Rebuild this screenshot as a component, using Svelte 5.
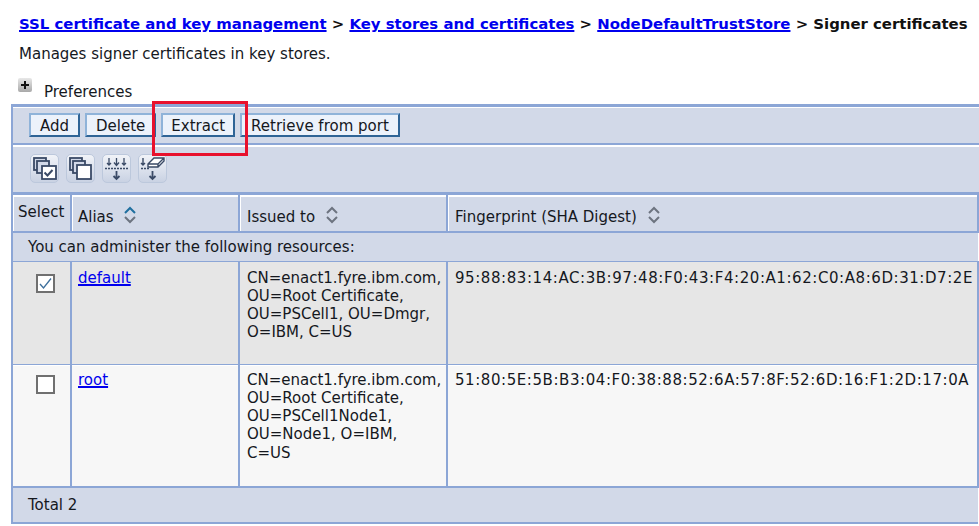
<script lang="ts">
  const crumbs = ['SSL certificate and key management', 'Key stores and certificates', 'NodeDefaultTrustStore'];
  const buttons = ['Add', 'Delete', 'Extract', 'Retrieve from port'];
  const rows = [
    {
      alias: 'default',
      checked: true,
      issued: ['CN=enact1.fyre.ibm.com,', 'OU=Root Certificate,', 'OU=PSCell1, OU=Dmgr,', 'O=IBM, C=US'],
      print: '95:88:83:14:AC:3B:97:48:F0:43:F4:20:A1:62:C0:A8:6D:31:D7:2E'
    },
    {
      alias: 'root',
      checked: false,
      issued: ['CN=enact1.fyre.ibm.com,', 'OU=Root Certificate,', 'OU=PSCell1Node1,', 'OU=Node1, O=IBM,', 'C=US'],
      print: '51:80:5E:5B:B3:04:F0:38:88:52:6A:57:8F:52:6D:16:F1:2D:17:0A'
    }
  ];
</script>

{#snippet sort(active)}
  <svg class="sort" width="14" height="20" viewBox="0 0 14 20" fill="none" stroke-width="2">
    <path d="M2 8 L7 3 L12 8" stroke={active ? '#1f6f9f' : '#6d7480'} />
    <path d="M2 12 L7 17 L12 12" stroke="#6d7480" />
  </svg>
{/snippet}

<div class="page">
  <div class="crumbs">
    {#each crumbs as c}
      <a href="#top">{c}</a><b>{' > '}</b>
    {/each}<b>Signer certificates</b>
  </div>
  <p class="desc">Manages signer certificates in key stores.</p>
  <div class="prefs">
    <span class="plus">
      <svg width="14" height="14" viewBox="0 0 14 14"><path d="M7 3v8M3 7h8" stroke="#111" stroke-width="2" /></svg>
    </span>
    <span>Preferences</span>
  </div>

  <div class="panel">
    <div class="toolbar">
      {#each buttons as b}
        <button>{b}</button>
      {/each}
    </div>
    <div class="iconbar">
      <span class="tool">
        <svg width="27" height="27" viewBox="0 0 27 27" fill="#fff" stroke="#3a4a66" stroke-width="1.800">
          <rect x="3" y="3" width="12" height="12" fill="#d2d9e8" />
          <rect x="6" y="6" width="12" height="12" fill="#d2d9e8" />
          <rect x="11" y="11" width="14" height="13" />
          <path d="M13.500 17.500l3 3 5-5.500" fill="none" stroke-width="2" />
        </svg>
      </span>
      <span class="tool">
        <svg width="27" height="27" viewBox="0 0 27 27" fill="#fff" stroke="#3a4a66" stroke-width="1.800">
          <rect x="3" y="3" width="12" height="12" fill="#d2d9e8" />
          <rect x="6" y="6" width="12" height="12" fill="#d2d9e8" />
          <rect x="10" y="10" width="14" height="14" />
        </svg>
      </span>
      <span class="tool">
        <svg width="27" height="27" viewBox="0 0 27 27" fill="none" stroke="#3a4a66" stroke-width="1.300">
          <path d="M6 3v7M4 8l2 2 2-2M13.500 3v7M11 7.500l2.500 3 2.500-3M21 3v7M19 8l2 2 2-2" />
          <path d="M2 13.500h23" stroke-dasharray="2 1" />
          <path d="M13.500 16v8M10.500 21l3 3 3-3" stroke-width="1.800" />
        </svg>
      </span>
      <span class="tool">
        <svg width="27" height="27" viewBox="0 0 27 27" fill="none" stroke="#3a4a66" stroke-width="1.400">
          <path d="M4 3v7M2 8l2 2 2-2" />
          <path d="M9 9l6-6h10v3l-6 6H9zM9 9h10v3M19 9l6-6" fill="#fff" />
          <path d="M2 13.500h8" stroke-dasharray="2 1" />
          <path d="M13.500 16v8M10.500 21l3 3 3-3" stroke-width="1.800" />
        </svg>
      </span>
    </div>

    <table>
      <colgroup>
        <col class="c1" />
        <col class="c2" />
        <col class="c3" />
        <col />
      </colgroup>
      <thead>
        <tr>
          <th class="sel">Select</th>
          <th class="alias">Alias {@render sort(true)}</th>
          <th>Issued to {@render sort(false)}</th>
          <th>Fingerprint (SHA Digest) {@render sort(false)}</th>
        </tr>
      </thead>
      <tbody>
        <tr class="note"><td colspan="4">You can administer the following resources:</td></tr>
        {#each rows as r, i}
          <tr class={i === 0 ? 'r0' : 'r1'}>
            <td class="check">
              <span class="box">
                {#if r.checked}
                  <svg width="15" height="15" viewBox="0 0 15 15" fill="none"><path d="M2 8l3.500 4 7.500-9.500" stroke="#3d6f9c" stroke-width="1.300" /></svg>
                {/if}
              </span>
            </td>
            <td class="alias"><a href="#top">{r.alias}</a></td>
            <td class="issued">
              {#each r.issued as line}
                <div>{line}</div>
              {/each}
            </td>
            <td class="print">{r.print}</td>
          </tr>
        {/each}
        <tr class="total"><td colspan="4">Total 2</td></tr>
      </tbody>
    </table>
  </div>

  <div class="mark"></div>
</div>

<style>
  :global(body) {
    margin: 0;
    background: #fff;
  }

  .page {
    position: relative;
    width: 979px;
    height: 526px;
    overflow: hidden;
    font-family: 'DejaVu Sans', Verdana, sans-serif;
    font-size: 15px;
    color: #15181e;
  }

  a {
    color: #0000ee;
    text-decoration-thickness: 2px;
  }

  .crumbs {
    padding: 14px 0 0 19px;
    height: 20px;
    line-height: 20px;
    font-size: 14.900px;
    font-weight: 700;
    white-space: pre;
    color: #111;
  }

  .desc {
    margin: 0;
    padding: 10px 0 0 19px;
    line-height: 20px;
  }

  .prefs {
    display: flex;
    align-items: flex-start;
    gap: 12px;
    height: 40px;
    padding: 14px 0 0 18px;
    line-height: 18px;
    box-sizing: border-box;
  }

  .plus {
    display: flex;
    width: 14px;
    height: 14px;
    border-radius: 2px;
    background: linear-gradient(#e8e8e8, #a9a9a9);
  }

  .prefs span:last-child {
    padding-top: 5px;
  }

  .panel {
    margin-left: 11px;
    border-left: 2px solid #8ca6d6;
    width: 968px;
    box-sizing: border-box;
    background: #fff;
  }

  .toolbar {
    display: flex;
    align-items: center;
    gap: 5px;
    height: 41px;
    box-sizing: border-box;
    padding: 0 0 0 16px;
    background: #d2d9e8;
    border-top: 3px solid #8ca6d6;
    border-bottom: 2px solid #8ca6d6;
    box-shadow: inset 0 1px 0 #fff;
  }

  button {
    height: 24px;
    padding: 1px 9px 0;
    font: inherit;
    color: inherit;
    background: #ecf2fb;
    border: 2px solid;
    border-color: #8fb3d9 #2f6496 #2f6496 #8fb3d9;
  }

  button:nth-child(3) {
    padding: 1px 8px 0;
  }

  .iconbar {
    display: flex;
    align-items: center;
    gap: 7px;
    height: 48px;
    margin-top: 2px;
    padding: 0 0 3px 17px;
    background: #d2d9e8;
    box-sizing: border-box;
    border-bottom: 3px solid #8ca6d6;
  }

  .tool {
    display: flex;
    align-items: center;
    justify-content: center;
    width: 29px;
    height: 29px;
    border-radius: 5px;
    background: linear-gradient(#f1f3f8, #c9d2e3);
    border: 1px solid #bcc8dc;
    box-sizing: border-box;
  }

  table {
    width: 100%;
    table-layout: fixed;
    border-collapse: collapse;
  }

  .c1 {
    width: 58px;
  }
  .c2 {
    width: 168px;
  }
  .c3 {
    width: 208px;
  }

  th,
  td {
    padding: 0;
    vertical-align: top;
    text-align: left;
    font-weight: 400;
  }

  th {
    height: 34px;
    padding: 0 0 2px 7px;
    vertical-align: bottom;
    line-height: 24px;
    background: #d2d9e8;
    border: 2px solid #8ca6d6;
    border-top: 0;
    box-shadow: inset 0 2px 0 #fff, inset 1px 0 0 #fff;
    white-space: nowrap;
  }

  th:first-child {
    border-left: 0;
    padding: 0 0 2px 5px;
    vertical-align: middle;
  }

  th.alias {
    padding-left: 6px;
  }

  .sort {
    vertical-align: -3px;
    margin-left: 5px;
  }

  .note td {
    height: 29px;
    padding: 0 0 0 15px;
    vertical-align: middle;
    background: #d2d9e8;
    border-top: 2px solid #fff;
    border-bottom: 1px solid #8ca6d6;
    box-sizing: border-box;
  }

  .r0 td,
  .r1 td {
    box-sizing: border-box;
    line-height: 18.250px;
    padding: 7px 5px 0 7px;
    border-left: 2px solid #8ca6d6;
    border-bottom: 2px solid #8ca6d6;
    white-space: nowrap;
  }

  .r0 td.alias,
  .r1 td.alias {
    padding-left: 6px;
  }

  .r0 td:first-child,
  .r1 td:first-child {
    border-left: 0;
  }

  .r0 td:last-child,
  .r1 td:last-child {
    border-right: 2px solid #8ca6d6;
  }

  .r0 td {
    height: 103px;
    background: #e6e6e6;
    border-bottom-width: 1px;
  }

  .r1 td {
    height: 123px;
    padding-top: 6px;
    background: #f7f7f7;
    box-shadow: inset 0 1px 0 #fff;
  }

  .print {
    letter-spacing: 0.57px;
  }

  .r0 td.check,
  .r1 td.check {
    padding: 12px 0 0 8px;
    text-align: center;
  }

  .r1 td.check {
    padding-top: 10px;
  }

  .box {
    display: inline-flex;
    align-items: center;
    justify-content: center;
    box-sizing: border-box;
    width: 19px;
    height: 19px;
    border: 2px solid #707070;
    background: #fff;
  }

  .total td {
    height: 36px;
    padding: 0 0 0 15px;
    vertical-align: middle;
    background: #d2d9e8;
    border-top: 2px solid #fff;
    border-bottom: 2px solid #8ca6d6;
    box-sizing: border-box;
  }

  /* annotation over the toolbar */
  .mark {
    position: absolute;
    left: 152px;
    top: 101px;
    width: 96px;
    height: 55px;
    box-sizing: border-box;
    border: 3px solid #e8112d;
  }
</style>
